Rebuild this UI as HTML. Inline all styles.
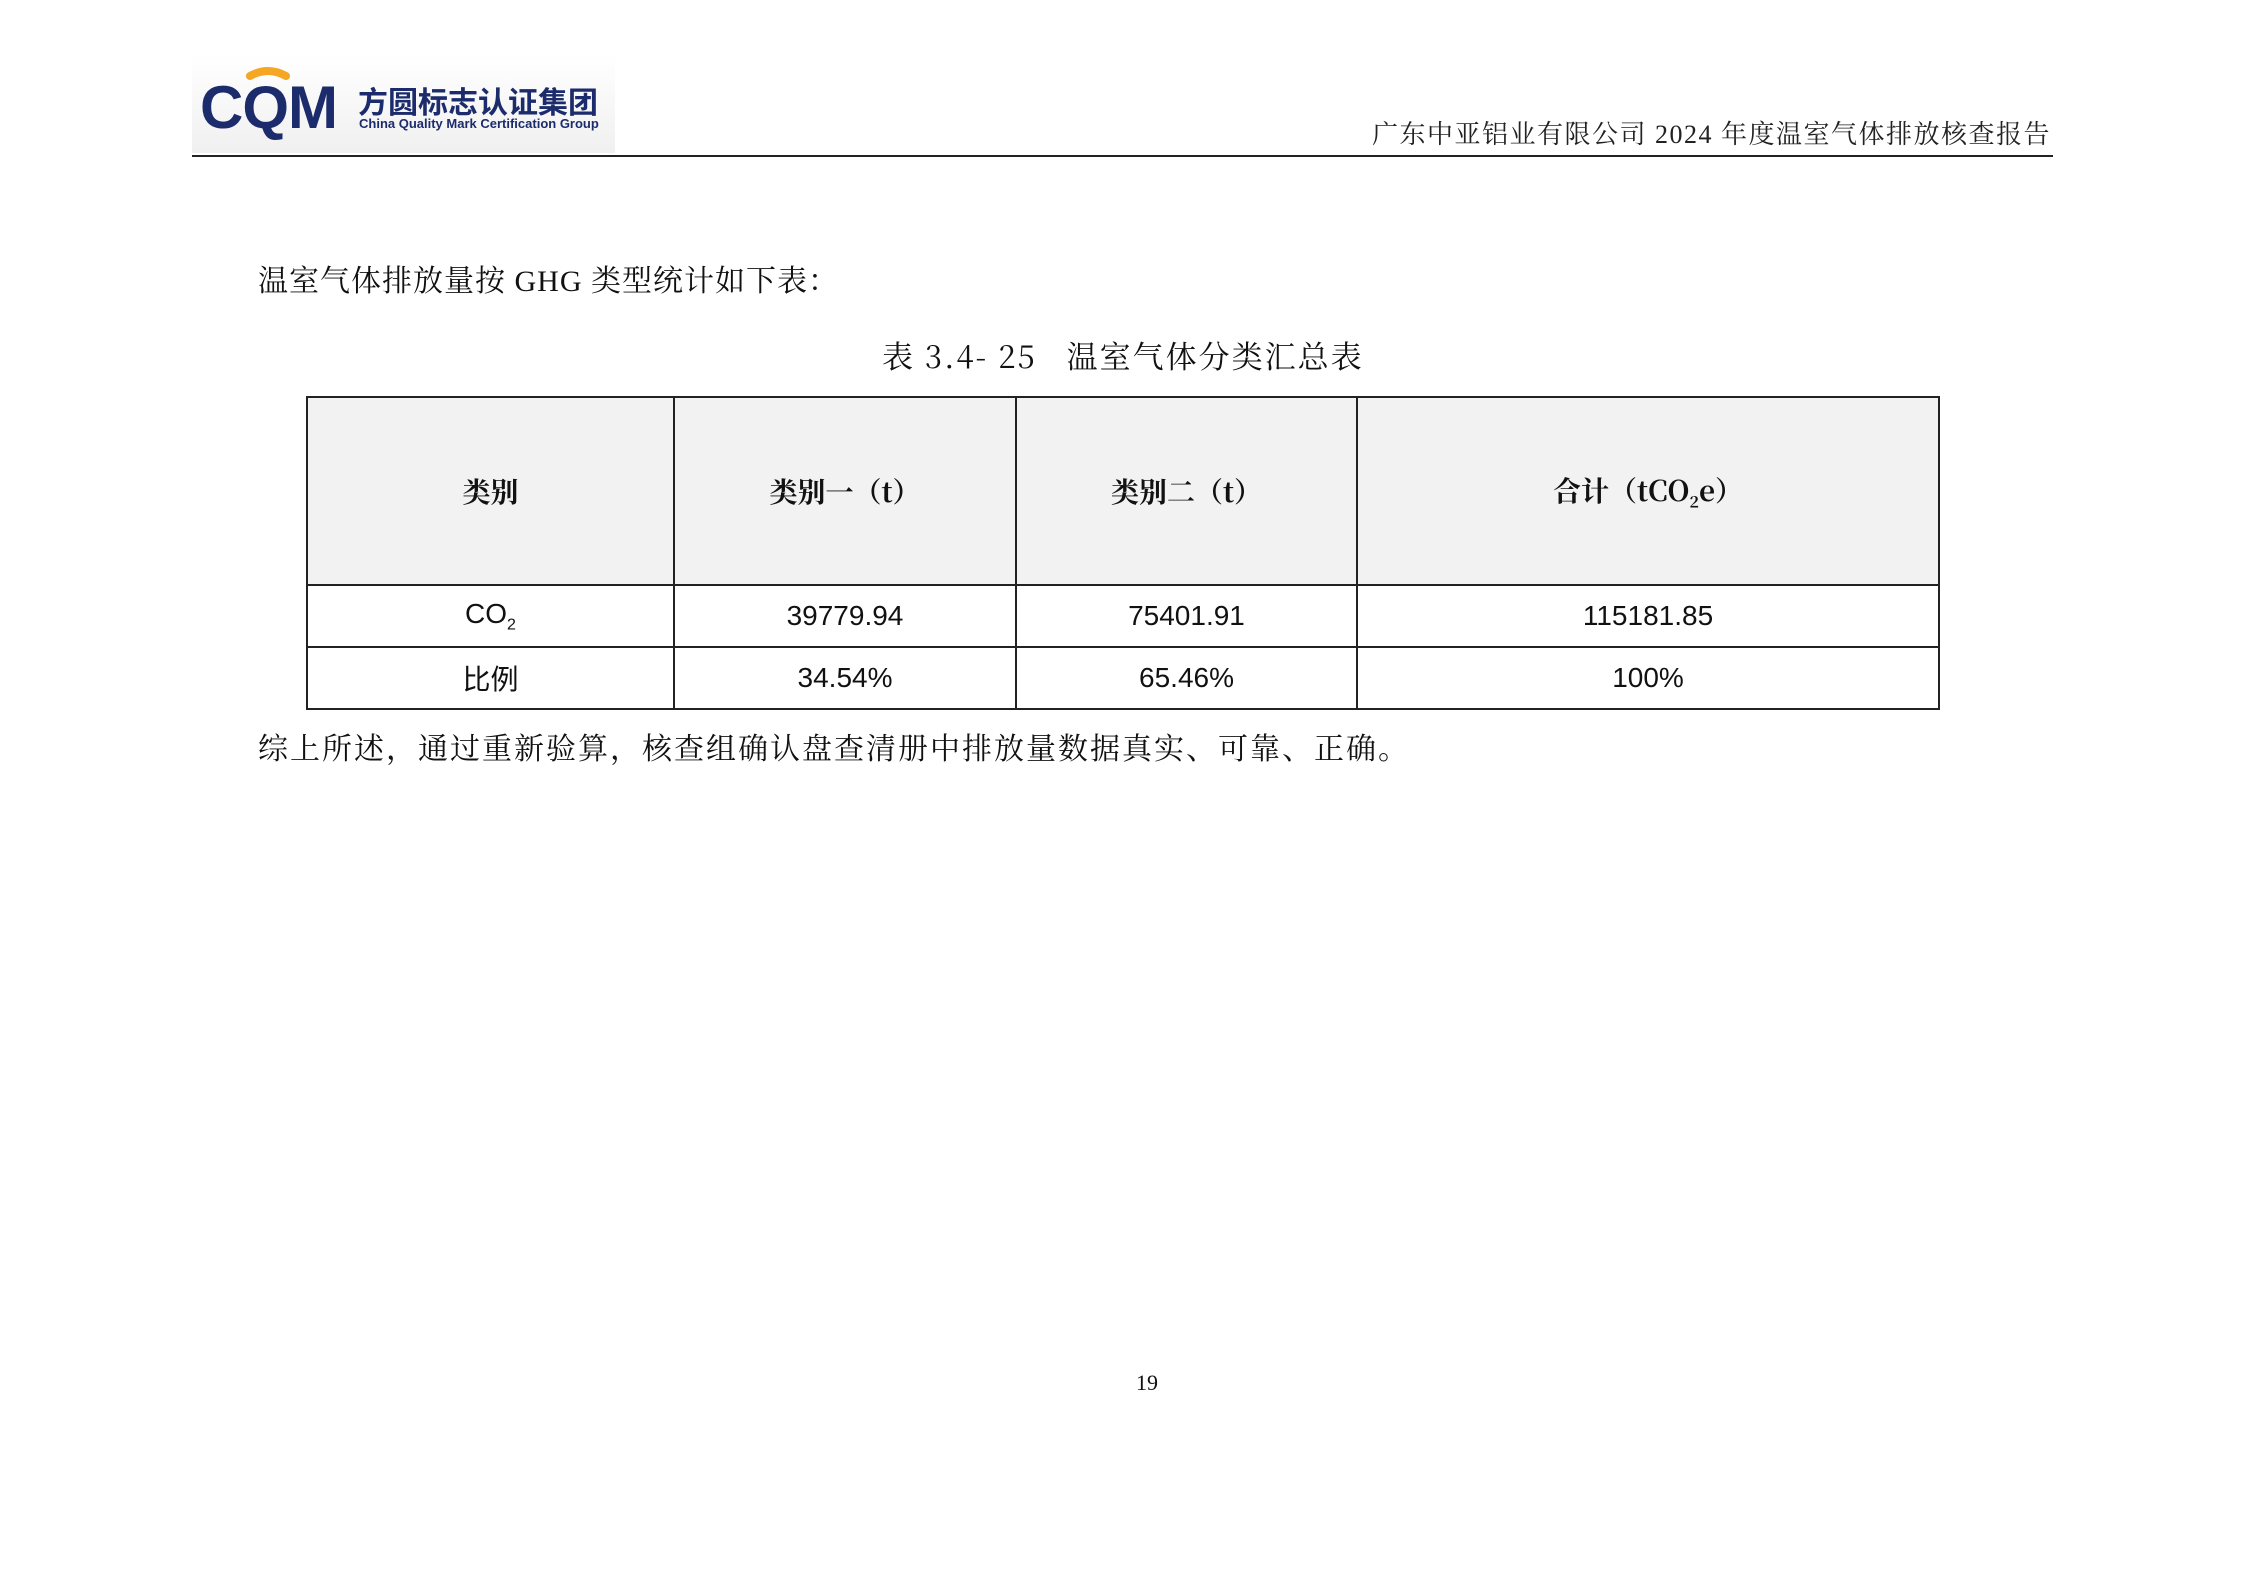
<!DOCTYPE html>
<html><head><meta charset="utf-8"><style>
body{margin:0;width:2245px;height:1587px;background:#fff;position:relative;overflow:hidden;font-family:"Liberation Serif","Noto Serif CJK SC",serif;color:#111}
.a{position:absolute;white-space:nowrap}
table{position:absolute;left:306px;top:396px;width:1634px;border-collapse:collapse;font-family:"Liberation Sans","Noto Sans CJK SC",sans-serif}
td{border:2px solid #222;text-align:center;font-size:28px;padding:0}
tr.h td{background:#f2f2f2;height:186px;font-weight:bold;font-family:"Noto Serif CJK SC",serif}
tr.r td{height:60px}
</style></head><body>
<div class="a" style="left:192px;top:55px;width:423px;height:98px;background:linear-gradient(#fff,#f0f0f0)"></div>
<svg class="a" style="left:192px;top:60px" width="165" height="80" viewBox="0 0 165 80">
<path d="M58 16 Q76 6 94 16" stroke="#f5a623" stroke-width="8" fill="none" stroke-linecap="round"/>
<text x="8" y="68" font-family="Liberation Sans" font-weight="bold" font-size="60" fill="#1b2b6b" letter-spacing="-1">CQM</text>
</svg>
<div class="a" style="left:358px;top:78px;font-family:'Noto Sans CJK SC',sans-serif;font-weight:bold;font-size:30px;color:#1b2b6b">方圆标志认证集团</div>
<div class="a" style="left:359px;top:116px;font-family:'Liberation Sans',sans-serif;font-size:13px;font-weight:bold;color:#1b2b6b">China Quality Mark Certification Group</div>
<div class="a" style="left:1372px;top:114px;font-size:26px;letter-spacing:1.5px;color:#222">广东中亚铝业有限公司 2024 年度温室气体排放核查报告</div>
<div class="a" style="left:192px;top:155px;width:1861px;height:2px;background:#222"></div>
<div class="a" style="left:258px;top:256px;font-size:30px;letter-spacing:1px">温室气体排放量按 GHG 类型统计如下表：</div>
<div class="a" style="left:882px;top:332px;font-size:31px;letter-spacing:2px;font-family:'Noto Serif CJK SC',serif">表 3.4- 25&nbsp;&nbsp; 温室气体分类汇总表</div>
<table>
<colgroup><col style="width:367px"><col style="width:342px"><col style="width:341px"><col></colgroup>
<tr class="h"><td>类别</td><td>类别一（t）</td><td>类别二（t）</td><td>合计（tCO<sub style="font-size:16px">2</sub>e）</td></tr>
<tr class="r"><td>CO<sub style="font-size:16px">2</sub></td><td>39779.94</td><td>75401.91</td><td>115181.85</td></tr>
<tr class="r"><td>比例</td><td>34.54%</td><td>65.46%</td><td>100%</td></tr>
</table>
<div class="a" style="left:258px;top:724px;font-size:30px;letter-spacing:2px">综上所述，通过重新验算，核查组确认盘查清册中排放量数据真实、可靠、正确。</div>
<div class="a" style="left:1136px;top:1370px;font-size:22px">19</div>
</body></html>
